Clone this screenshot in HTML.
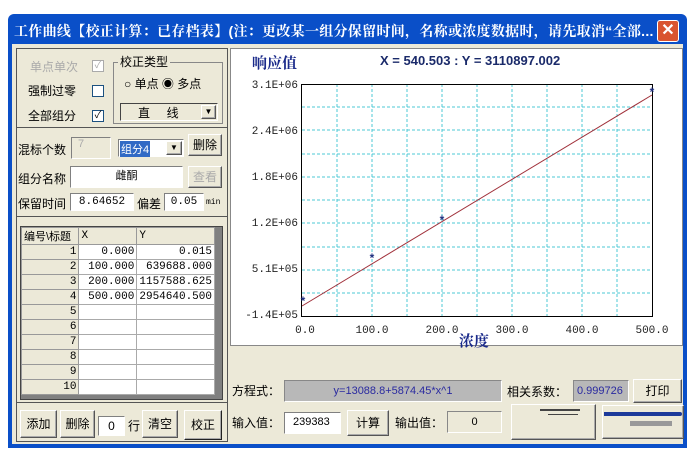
<!DOCTYPE html>
<html><head><meta charset="utf-8"><style>
*{box-sizing:border-box;margin:0;padding:0}
body{width:692px;height:456px;background:#fff;position:relative;overflow:hidden;font-family:"Liberation Sans","Noto Sans CJK SC",sans-serif;font-size:12px;color:#000}
.a{position:absolute}
.win{left:8px;top:14px;width:679px;height:434px;background:#0a4fc8;border-radius:6px 6px 0 0}
.body{left:12px;top:44px;width:671px;height:400px;background:#ece9d8}
.title{left:14px;top:21px;color:#fff;font-weight:bold;font-size:14px;white-space:nowrap;font-family:"Liberation Sans","Noto Serif CJK SC",serif;letter-spacing:0.3px}
.close{left:657px;top:20px;width:22px;height:22px;background:#d9542f;border:1px solid #fff;border-radius:3px;color:#fff;text-align:center;font-size:16px;line-height:20px;font-weight:bold}
.sunk{border:1px solid;border-color:#808080 #fff #fff #808080;background:#fff}
.btn{border:1px solid;border-color:#fff #555 #555 #fff;background:#ece9d8;text-align:center;box-shadow:inset -1px -1px #aaa}
.cb{width:12px;height:12px;border:1px solid #1c5180;background:#fff;font-size:10px;line-height:10px;text-align:center}
.grp{border:1px solid #888}
table{border-collapse:collapse;font-family:"Liberation Mono","Noto Sans CJK SC",monospace;font-size:11px}
td{border:1px solid #aaa;height:15px;padding:0 2px;text-align:right;background:#fff}
td.h{background:#ece9d8;border-color:#999}
</style></head><body>
<div class="a win"></div>
<div class="a title">工作曲线【校正计算：已存档表】(注：更改某一组分保留时间，名称或浓度数据时，请先取消“全部...</div>
<div class="a close">✕</div>
<div class="a body"></div>
<!-- left panel -->
<div class="a" style="left:16px;top:48px;width:212px;height:394px;border:1px solid #555;background:#ece9d8"></div>
<div class="a" style="left:16px;top:127px;width:212px;height:1px;background:#555"></div>
<div class="a" style="left:16px;top:216px;width:212px;height:1px;background:#555"></div>
<div class="a" style="left:16px;top:402px;width:212px;height:1px;background:#555"></div>
<div class="a" style="left:30px;top:58px;color:#aaa">单点单次</div>
<div class="a cb" style="left:92px;top:60px;border-color:#aaa;color:#aaa">✓</div>
<div class="a" style="left:28px;top:82px">强制过零</div>
<div class="a cb" style="left:92px;top:85px"></div>
<div class="a" style="left:28px;top:107px">全部组分</div>
<div class="a cb" style="left:92px;top:110px">✓</div>
<div class="a grp" style="left:113px;top:62px;width:110px;height:62px"></div>
<div class="a" style="left:118px;top:53px;background:#ece9d8;padding:0 2px">校正类型</div>
<div class="a" style="left:124px;top:75px">○ 单点 ◉ 多点</div>
<div class="a sunk" style="left:120px;top:103px;width:98px;height:18px;background:#ece9d8;border-color:#444 #fff #fff #444"></div>
<div class="a" style="left:138px;top:104px">直&nbsp;&nbsp;&nbsp;&nbsp;&nbsp;线</div>
<div class="a btn" style="left:201px;top:105px;width:15px;height:14px;font-size:8px;line-height:12px">▼</div>

<div class="a" style="left:18px;top:141px">混标个数</div>
<div class="a sunk" style="left:71px;top:137px;width:40px;height:22px;background:#ece9d8;color:#aaa;padding-left:6px;font-size:11px">7</div>
<div class="a sunk" style="left:118px;top:139px;width:66px;height:18px"></div>
<div class="a" style="left:120px;top:141px;background:#316ac5;color:#fff;font-size:11px;padding:0 1px">组分4</div>
<div class="a btn" style="left:166px;top:141px;width:16px;height:14px;font-size:8px;line-height:12px">▼</div>
<div class="a btn" style="left:188px;top:134px;width:34px;height:22px;line-height:20px">删除</div>
<div class="a" style="left:18px;top:170px">组分名称</div>
<div class="a sunk" style="left:70px;top:166px;width:113px;height:22px;text-align:center;font-size:11px">雌酮</div>
<div class="a btn" style="left:188px;top:166px;width:34px;height:22px;line-height:20px;color:#aaa">查看</div>
<div class="a" style="left:18px;top:195px">保留时间</div>
<div class="a sunk" style="left:70px;top:193px;width:64px;height:18px;text-align:center;font-family:'Liberation Mono',monospace;font-size:11px;line-height:16px">8.64652</div>
<div class="a" style="left:137px;top:195px">偏差</div>
<div class="a sunk" style="left:164px;top:193px;width:40px;height:18px;text-align:center;font-family:'Liberation Mono',monospace;font-size:11px;line-height:16px">0.05</div>
<div class="a" style="left:206px;top:198px;font-size:8px;font-family:'Liberation Mono',monospace">min</div>

<div class="a" style="left:20px;top:226px;width:203px;height:174px;background:#808080;border:1px solid #444"></div>
<table class="a" style="left:21px;top:227px;width:194px">
<tr><td class="h" style="text-align:left;width:58px;font-family:'Liberation Sans','Noto Sans CJK SC',sans-serif">编号\标题</td><td class="h" style="text-align:left;width:58px">X</td><td class="h" style="text-align:left">Y</td></tr>
<tr><td class="h">1</td><td>0.000</td><td>0.015</td></tr>
<tr><td class="h">2</td><td>100.000</td><td>639688.000</td></tr>
<tr><td class="h">3</td><td>200.000</td><td>1157588.625</td></tr>
<tr><td class="h">4</td><td>500.000</td><td>2954640.500</td></tr>
<tr><td class="h">5</td><td></td><td></td></tr>
<tr><td class="h">6</td><td></td><td></td></tr>
<tr><td class="h">7</td><td></td><td></td></tr>
<tr><td class="h">8</td><td></td><td></td></tr>
<tr><td class="h">9</td><td></td><td></td></tr>
<tr><td class="h">10</td><td></td><td></td></tr>
</table>
<div class="a btn" style="left:20px;top:410px;width:37px;height:28px;line-height:26px">添加</div>
<div class="a btn" style="left:60px;top:410px;width:35px;height:28px;line-height:26px">删除</div>
<div class="a sunk" style="left:98px;top:416px;width:27px;height:20px;text-align:center;line-height:18px">0</div>
<div class="a" style="left:128px;top:417px">行</div>
<div class="a btn" style="left:142px;top:410px;width:36px;height:28px;line-height:26px">清空</div>
<div class="a btn" style="left:184px;top:410px;width:38px;height:30px;line-height:28px;border-color:#fff #222 #222 #fff">校正</div>

<!-- chart -->
<div class="a" style="left:230px;top:48px;width:453px;height:298px;background:#fff;border:1px solid #888"></div>
<svg class="a" style="left:0;top:0" width="692" height="456">
<g stroke="#4cc9d6" stroke-dasharray="3,2" stroke-width="1">
<line x1="337" y1="84" x2="337" y2="317"/><line x1="372" y1="84" x2="372" y2="317"/><line x1="407" y1="84" x2="407" y2="317"/><line x1="442" y1="84" x2="442" y2="317"/><line x1="477" y1="84" x2="477" y2="317"/><line x1="512" y1="84" x2="512" y2="317"/><line x1="547" y1="84" x2="547" y2="317"/><line x1="582" y1="84" x2="582" y2="317"/><line x1="617" y1="84" x2="617" y2="317"/>
<line x1="302" y1="107" x2="652" y2="107"/><line x1="302" y1="130" x2="652" y2="130"/><line x1="302" y1="154" x2="652" y2="154"/><line x1="302" y1="177" x2="652" y2="177"/><line x1="302" y1="200" x2="652" y2="200"/><line x1="302" y1="223" x2="652" y2="223"/><line x1="302" y1="247" x2="652" y2="247"/><line x1="302" y1="270" x2="652" y2="270"/><line x1="302" y1="293" x2="652" y2="293"/>
</g>
<rect x="301.5" y="84.5" width="351" height="232" fill="none" stroke="#000"/>
<line x1="302" y1="306" x2="652" y2="95" stroke="#a0303a" stroke-width="1"/>
<g fill="#203080" font-size="12" text-anchor="middle" font-family="Liberation Sans" font-weight="bold">
<text x="303" y="305">*</text><text x="372" y="262">*</text><text x="442" y="224">*</text><text x="652" y="96">*</text></g>
<g font-family="Liberation Mono" font-size="11" fill="#222" text-anchor="end">
<text x="298" y="88">3.1E+06</text><text x="298" y="134">2.4E+06</text><text x="298" y="180">1.8E+06</text><text x="298" y="226">1.2E+06</text><text x="298" y="272">5.1E+05</text><text x="298" y="318">-1.4E+05</text></g>
<g font-family="Liberation Mono" font-size="11" fill="#222" text-anchor="middle">
<text x="305" y="333">0.0</text><text x="372" y="333">100.0</text><text x="442" y="333">200.0</text><text x="512" y="333">300.0</text><text x="582" y="333">400.0</text><text x="652" y="333">500.0</text></g>
</svg>
<div class="a" style="left:252px;top:52px;color:#1a2a8a;font-weight:bold;font-size:15px;font-family:'Liberation Serif','Noto Serif CJK SC',serif">响应值</div>
<div class="a" style="left:380px;top:53px;color:#1a2a6a;font-weight:bold;font-size:13px">X = 540.503 : Y = 3110897.002</div>
<div class="a" style="left:459px;top:330px;color:#1a2a8a;font-weight:bold;font-size:15px;font-family:'Liberation Serif','Noto Serif CJK SC',serif">浓度</div>

<!-- bottom right -->
<div class="a" style="left:232px;top:382px">方程式：</div>
<div class="a" style="left:284px;top:380px;width:218px;height:22px;background:#b8b8b8;border:1px solid;border-color:#888 #fff #fff #888;color:#2a2aa0;text-align:center;line-height:20px;font-size:11px">y=13088.8+5874.45*x^1</div>
<div class="a" style="left:507px;top:383px;font-size:12px;white-space:nowrap">相关系数：</div>
<div class="a" style="left:573px;top:380px;width:56px;height:22px;background:#b8b8b8;border:1px solid;border-color:#888 #fff #fff #888;color:#2a2aa0;line-height:20px;font-size:11px;padding-left:3px">0.999726</div>
<div class="a btn" style="left:633px;top:379px;width:49px;height:24px;line-height:22px">打印</div>
<div class="a" style="left:232px;top:414px">输入值：</div>
<div class="a sunk" style="left:284px;top:412px;width:57px;height:22px;font-size:11px;padding-left:8px;line-height:18px">239383</div>
<div class="a btn" style="left:347px;top:410px;width:42px;height:26px;line-height:24px">计算</div>
<div class="a" style="left:395px;top:414px">输出值：</div>
<div class="a" style="left:447px;top:411px;width:55px;height:22px;border:1px solid;border-color:#888 #fff #fff #888;text-align:center;line-height:20px;font-size:11px">0</div>
<div class="a btn" style="left:511px;top:404px;width:85px;height:36px"></div>
<div class="a" style="left:540px;top:409px;width:40px;height:2px;background:#444"></div>
<div class="a" style="left:548px;top:414px;width:30px;height:1px;background:#444"></div>
<div class="a btn" style="left:602px;top:405px;width:82px;height:34px"></div>
<div class="a" style="left:604px;top:412px;width:78px;height:4px;background:#1c3a9a;border-radius:0 4px 4px 0"></div>
<div class="a" style="left:630px;top:421px;width:42px;height:5px;background:#999"></div>
</body></html>
